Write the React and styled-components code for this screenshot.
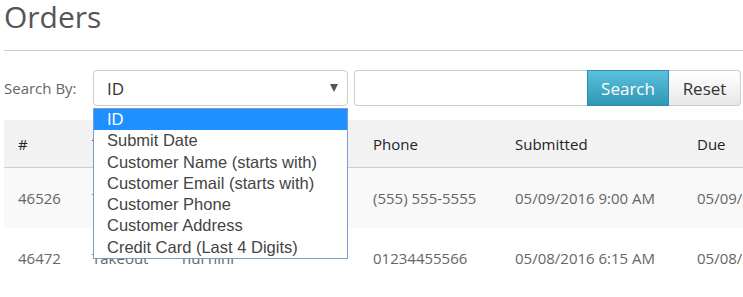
import * as React from "react";
import styled, { createGlobalStyle } from "styled-components";

const GlobalStyle = createGlobalStyle`
  html, body {
    margin: 0;
    padding: 0;
    background: #fff;
    overflow: hidden;
  }
  body {
    font-family: "Open Sans", "Liberation Sans", sans-serif;
  }
`;

const Page = styled.div`
  padding: 0 0 0 4px;
  width: 739px;
  height: 297px;
  overflow: hidden;
`;

const Title = styled.h1`
  margin: 0;
  font-size: 30px;
  line-height: 33px;
  font-weight: 400;
  color: #555;
`;

const Rule = styled.hr`
  margin: 17px 0 19px 0;
  border: 0;
  border-top: 1px solid #ccc;
  height: 0;
`;

const SearchRow = styled.div`
  display: flex;
  align-items: center;
  height: 36px;
  position: relative;
  z-index: 2;
`;

const Label = styled.label`
  width: 89px;
  font-size: 15px;
  color: #666;
`;

const SelectWrap = styled.div`
  position: relative;
  width: 255px;
  height: 36px;
`;

const SelectBox = styled.div`
  box-sizing: border-box;
  height: 36px;
  border: 1px solid #ccc;
  border-radius: 4px;
  background: #fff;
  display: flex;
  align-items: center;
  justify-content: space-between;
  padding: 0 9px 0 13px;
  font-size: 17px;
  color: #333;
`;

const Caret = styled.span`
  width: 0;
  height: 0;
  border-left: 4px solid transparent;
  border-right: 4px solid transparent;
  border-top: 8px solid #555;
`;

const Menu = styled.ul`
  position: absolute;
  top: 38px;
  left: 0;
  width: 255px;
  box-sizing: border-box;
  margin: 0;
  padding: 0;
  list-style: none;
  background: #fff;
  border: 1px solid #7a9cd3;
`;

const Option = styled.li`
  height: 21.3px;
  line-height: 21px;
  padding-left: 13px;
  font-family: "Liberation Sans", Arial, sans-serif;
  font-size: 16.5px;
  color: ${p => (p.$active ? "#fff" : "#444")};
  background: ${p => (p.$active ? "#1e90ff" : "#fff")};
  white-space: nowrap;
`;

const InputGroup = styled.div`
  display: flex;
  margin-left: 6px;
  height: 36px;
`;

const TextInput = styled.input`
  box-sizing: border-box;
  width: 233px;
  height: 36px;
  border: 1px solid #ccc;
  border-right: 0;
  border-radius: 4px 0 0 4px;
  outline: none;
`;

const Button = styled.button`
  box-sizing: border-box;
  height: 36px;
  width: ${p => p.$w}px;
  font-family: "Open Sans", "Liberation Sans", sans-serif;
  font-size: 17px;
  padding: 0;
  border: 1px solid ${p => (p.$primary ? "#2b8fb0" : "#ccc")};
  border-left-width: ${p => (p.$primary ? 1 : 0)}px;
  border-radius: ${p => (p.$primary ? "0" : "0 4px 4px 0")};
  color: ${p => (p.$primary ? "#fff" : "#333")};
  background: ${p =>
    p.$primary
      ? "linear-gradient(#5bc0de, #2f96b4)"
      : "linear-gradient(#fff, #e8e8e8)"};
`;

const Table = styled.table`
  margin-top: 14px;
  border-collapse: collapse;
  table-layout: fixed;
  width: 860px;
  font-size: 15px;
`;

const Head = styled.th`
  height: 47px;
  padding: 0 0 0 14px;
  text-align: left;
  font-weight: 400;
  color: #222;
  background: #f2f2f2;
  border-bottom: 1px solid #ccc;
  white-space: nowrap;
`;

const Row = styled.tr`
  background: ${p => (p.$striped ? "#f9f9f9" : "#fff")};
`;

const Cell = styled.td`
  height: 60px;
  padding: 0 0 0 14px;
  color: #666;
  white-space: nowrap;
  overflow: hidden;
`;

const options = [
  "ID",
  "Submit Date",
  "Customer Name (starts with)",
  "Customer Email (starts with)",
  "Customer Phone",
  "Customer Address",
  "Credit Card (Last 4 Digits)"
];

const columns = [
  { label: "#", width: 74 },
  { label: "Type", width: 90 },
  { label: "Name", width: 191 },
  { label: "Phone", width: 142 },
  { label: "Submitted", width: 182 },
  { label: "Due", width: 181 }
];

const orders = [
  ["46526", "Takeout", "Jane Smith", "(555) 555-5555", "05/09/2016 9:00 AM", "05/09/2016 9:30 AM"],
  ["46472", "Takeout", "hui hini", "01234455566", "05/08/2016 6:15 AM", "05/08/2016 6:45 AM"]
];

const App = () => {
  return (
    <Page>
      <GlobalStyle />
      <Title>Orders</Title>
      <Rule />
      <SearchRow>
        <Label>Search By:</Label>
        <SelectWrap>
          <SelectBox>
            <span>ID</span>
            <Caret />
          </SelectBox>
          <Menu>
            {options.map((o, i) => (
              <Option key={o} $active={i === 0}>
                {o}
              </Option>
            ))}
          </Menu>
        </SelectWrap>
        <InputGroup>
          <TextInput />
          <Button $primary $w={82}>Search</Button>
          <Button $w={72}>Reset</Button>
        </InputGroup>
      </SearchRow>
      <Table>
        <colgroup>
          {columns.map(c => (
            <col key={c.label} style={{ width: c.width }} />
          ))}
        </colgroup>
        <thead>
          <tr>
            {columns.map(c => (
              <Head key={c.label}>{c.label}</Head>
            ))}
          </tr>
        </thead>
        <tbody>
          {orders.map((r, i) => (
            <Row key={r[0]} $striped={i === 0}>
              {r.map((v, j) => (
                <Cell key={j}>{v}</Cell>
              ))}
            </Row>
          ))}
        </tbody>
      </Table>
    </Page>
  );
};

export default App;
